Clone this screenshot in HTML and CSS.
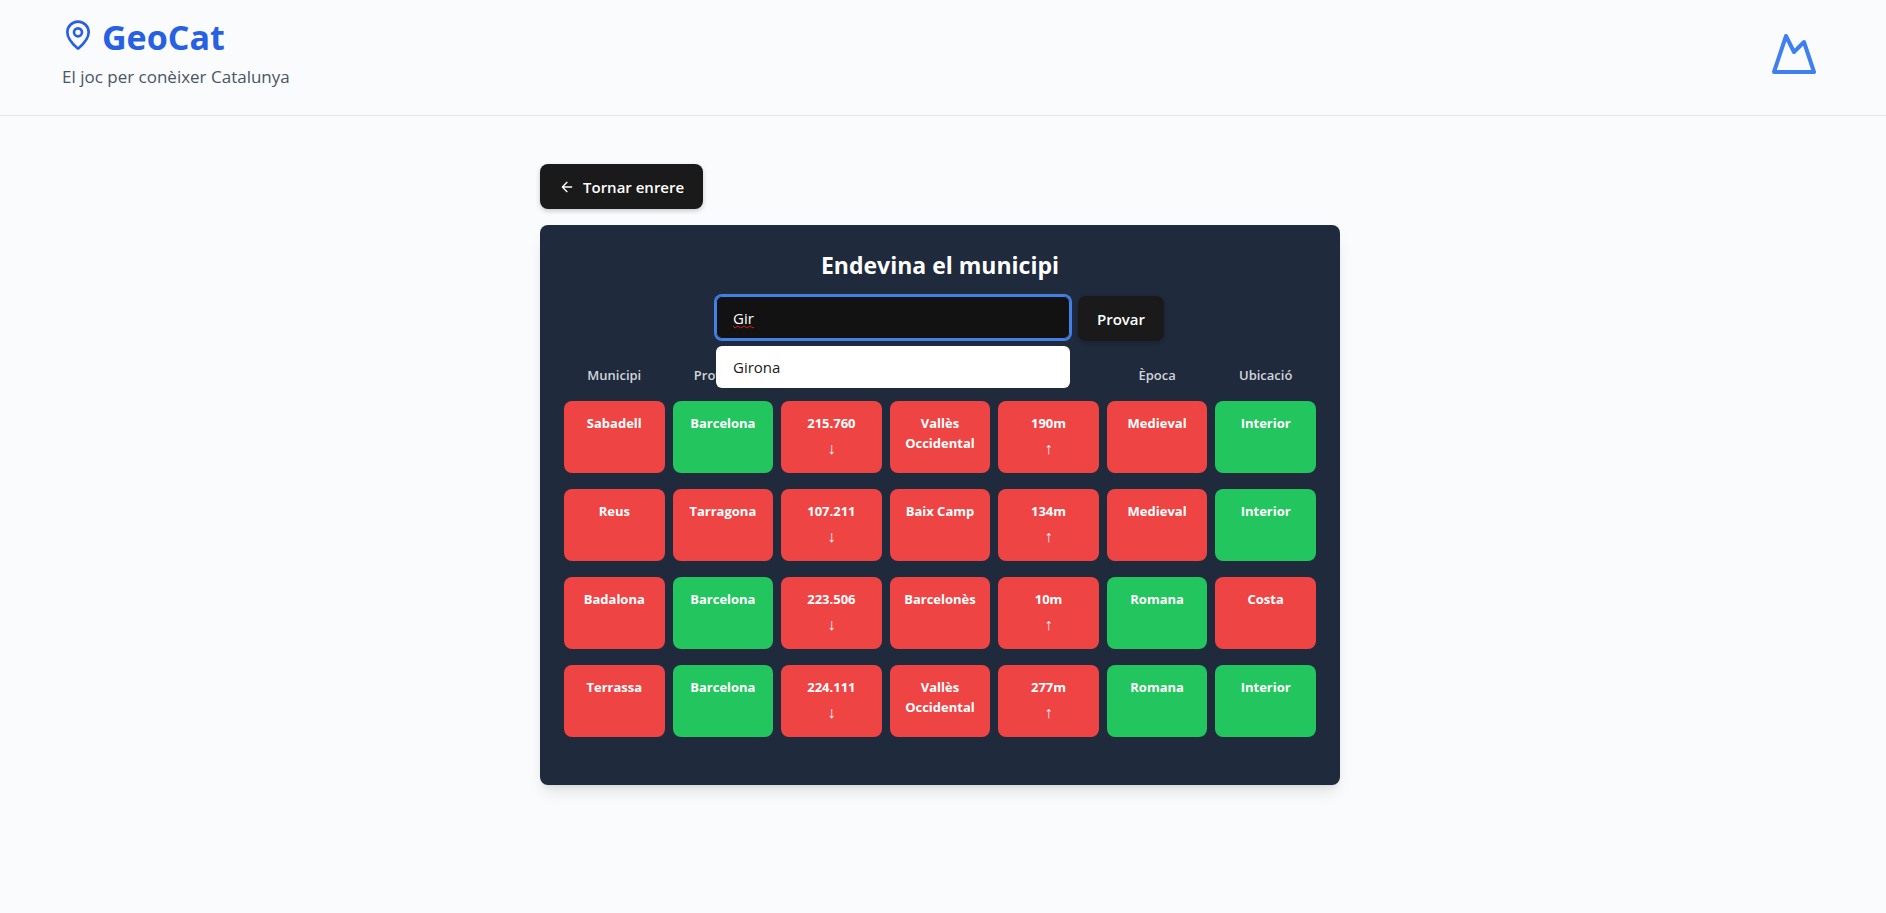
FILE: index.html
```html
<!DOCTYPE html>
<html lang="ca">
<head>
<meta charset="utf-8">
<title>GeoCat</title>
<link rel="stylesheet" href="styles.css">
</head>
<body>
<header class="site-header">
  <div>
    <h1 class="brand">
      <svg class="brand-icon" viewBox="0 0 24 24" aria-hidden="true"><path d="M20 10c0 4.993-5.539 10.193-7.399 11.799a1 1 0 0 1-1.202 0C9.539 20.193 4 14.993 4 10a8 8 0 0 1 16 0"/><circle cx="12" cy="10" r="3"/></svg>
      <span>GeoCat</span>
    </h1>
    <p class="tagline">El joc per conèixer Catalunya</p>
  </div>
  <svg class="mountain" viewBox="0 0 24 24" aria-hidden="true"><path d="m8 3 4 8 5-5 5 15H2L8 3z"/></svg>
</header>
<main class="content">
  <button class="btn" type="button">
    <svg class="btn-icon" viewBox="0 0 24 24" aria-hidden="true"><path d="m12 19-7-7 7-7M19 12H5"/></svg>
    <span>Tornar enrere</span>
  </button>
  <section class="card">
    <h2 class="card-title">Endevina el municipi</h2>
    <form class="guess">
      <div class="field">
        <input class="guess-input" type="text" value="Gir" aria-label="Municipi">
        <svg class="squiggle" viewBox="0 0 21 4" aria-hidden="true"><path d="M0 1l2 2 3-2 3 2 3-2 3 2 3-2 3 2 1-1"/></svg>
        <ul class="suggestions"><li>Girona</li></ul>
      </div>
      <button class="btn" type="button">Provar</button>
    </form>
    <table class="results">
      <thead>
        <tr><th>Municipi</th><th>Província</th><th>Població</th><th>Comarca</th><th>Altitud</th><th>Època</th><th>Ubicació</th></tr>
      </thead>
      <tbody>
        <tr><td>Sabadell</td><td class="hit">Barcelona</td><td>215.760<span class="hint">↓</span></td><td>Vallès Occidental</td><td>190m<span class="hint">↑</span></td><td>Medieval</td><td class="hit">Interior</td></tr>
        <tr><td>Reus</td><td>Tarragona</td><td>107.211<span class="hint">↓</span></td><td>Baix Camp</td><td>134m<span class="hint">↑</span></td><td>Medieval</td><td class="hit">Interior</td></tr>
        <tr><td>Badalona</td><td class="hit">Barcelona</td><td>223.506<span class="hint">↓</span></td><td>Barcelonès</td><td>10m<span class="hint">↑</span></td><td class="hit">Romana</td><td>Costa</td></tr>
        <tr><td>Terrassa</td><td class="hit">Barcelona</td><td>224.111<span class="hint">↓</span></td><td>Vallès Occidental</td><td>277m<span class="hint">↑</span></td><td class="hit">Romana</td><td class="hit">Interior</td></tr>
      </tbody>
    </table>
  </section>
</main>
</body>
</html>
```
FILE: styles.css
```css
* { box-sizing: border-box; margin: 0; }

body {
  min-height: 100vh;
  background: #f9fbfd;
  font-family: "Open Sans", "Noto Sans", sans-serif;
  font-size: 16px;
  line-height: 24px;
}

svg {
  fill: none;
  stroke: currentColor;
  stroke-width: 2;
  stroke-linecap: round;
  stroke-linejoin: round;
}

.site-header {
  display: flex;
  justify-content: space-between;
  align-items: center;
  padding: 16px 68px 24px 62px;
  border-bottom: 1px solid #e2e4e8;
}

.brand {
  display: flex;
  align-items: flex-start;
  gap: 8px;
  color: #2860e2;
  font-size: 34px;
  font-weight: 700;
  line-height: 42px;
}

.brand-icon { width: 32px; height: 32px; margin-top: 3px; }

.tagline {
  margin-top: 5px;
  color: #4b5563;
  font-size: 17px;
  line-height: 28px;
}

.mountain { width: 48px; height: 48px; color: #3f80ee; }

.content {
  max-width: 806px;
  margin: 48px auto;
  padding-right: 6px;
}

.btn {
  display: inline-flex;
  align-items: center;
  gap: 8px;
  height: 45px;
  padding: 0 19px;
  border: 0;
  border-radius: 8px;
  background: #1a1a1a;
  color: #fff;
  font: 600 15px/24px "Open Sans", "Noto Sans", sans-serif;
  box-shadow: 0 2px 5px rgba(0, 0, 0, 0.2);
}

.btn-icon { width: 16px; height: 16px; }

.card {
  margin-top: 16px;
  padding: 24px 24px 32px;
  border-radius: 8px;
  background: #1f2a3c;
  box-shadow: 0 10px 15px -3px rgba(0, 0, 0, 0.1), 0 4px 6px -4px rgba(0, 0, 0, 0.1);
}

.card-title {
  color: #fff;
  font-size: 23px;
  line-height: 32px;
  text-align: center;
}

.guess {
  display: flex;
  gap: 8px;
  max-width: 448px;
  margin: 15px auto 8px;
}

.field { position: relative; flex: 1; }

.guess-input {
  display: block;
  width: 100%;
  height: 43px;
  padding: 0 17px;
  border: 0;
  border-radius: 6px;
  outline: 0;
  background: #121212;
  box-shadow: inset 0 0 0 1px #4380e6, 0 0 0 2px #4380e6;
  color: #fff;
  font: 400 15px/24px "Open Sans", "Noto Sans", sans-serif;
}

.squiggle {
  position: absolute;
  left: 17px;
  top: 29px;
  width: 21px;
  height: 4px;
  color: #c8201c;
  stroke-width: 1;
}

.suggestions {
  position: absolute;
  top: 50px;
  left: 0;
  right: 0;
  padding: 9px 17px;
  border-radius: 6px;
  background: #fff;
  color: #1a1a1a;
  font-size: 15px;
  list-style: none;
}

.results {
  width: calc(100% + 16px);
  margin: 0 -8px;
  table-layout: fixed;
  border-collapse: separate;
  border-spacing: 8px 16px;
  font-size: 13px;
  line-height: 20px;
  text-align: center;
}

.results th { padding: 0; color: #d1d5db; font-weight: 600; }

.results td {
  height: 72px;
  padding: 12px 8px;
  border-radius: 8px;
  background: #ef4444;
  color: #fff;
  font-weight: 700;
  vertical-align: top;
}

.results .hit { background: #22c55e; }

.hint {
  display: block;
  margin-top: 4px;
  font-family: "Liberation Sans", sans-serif;
  font-size: 16px;
  font-weight: 400;
  line-height: 24px;
}
```
